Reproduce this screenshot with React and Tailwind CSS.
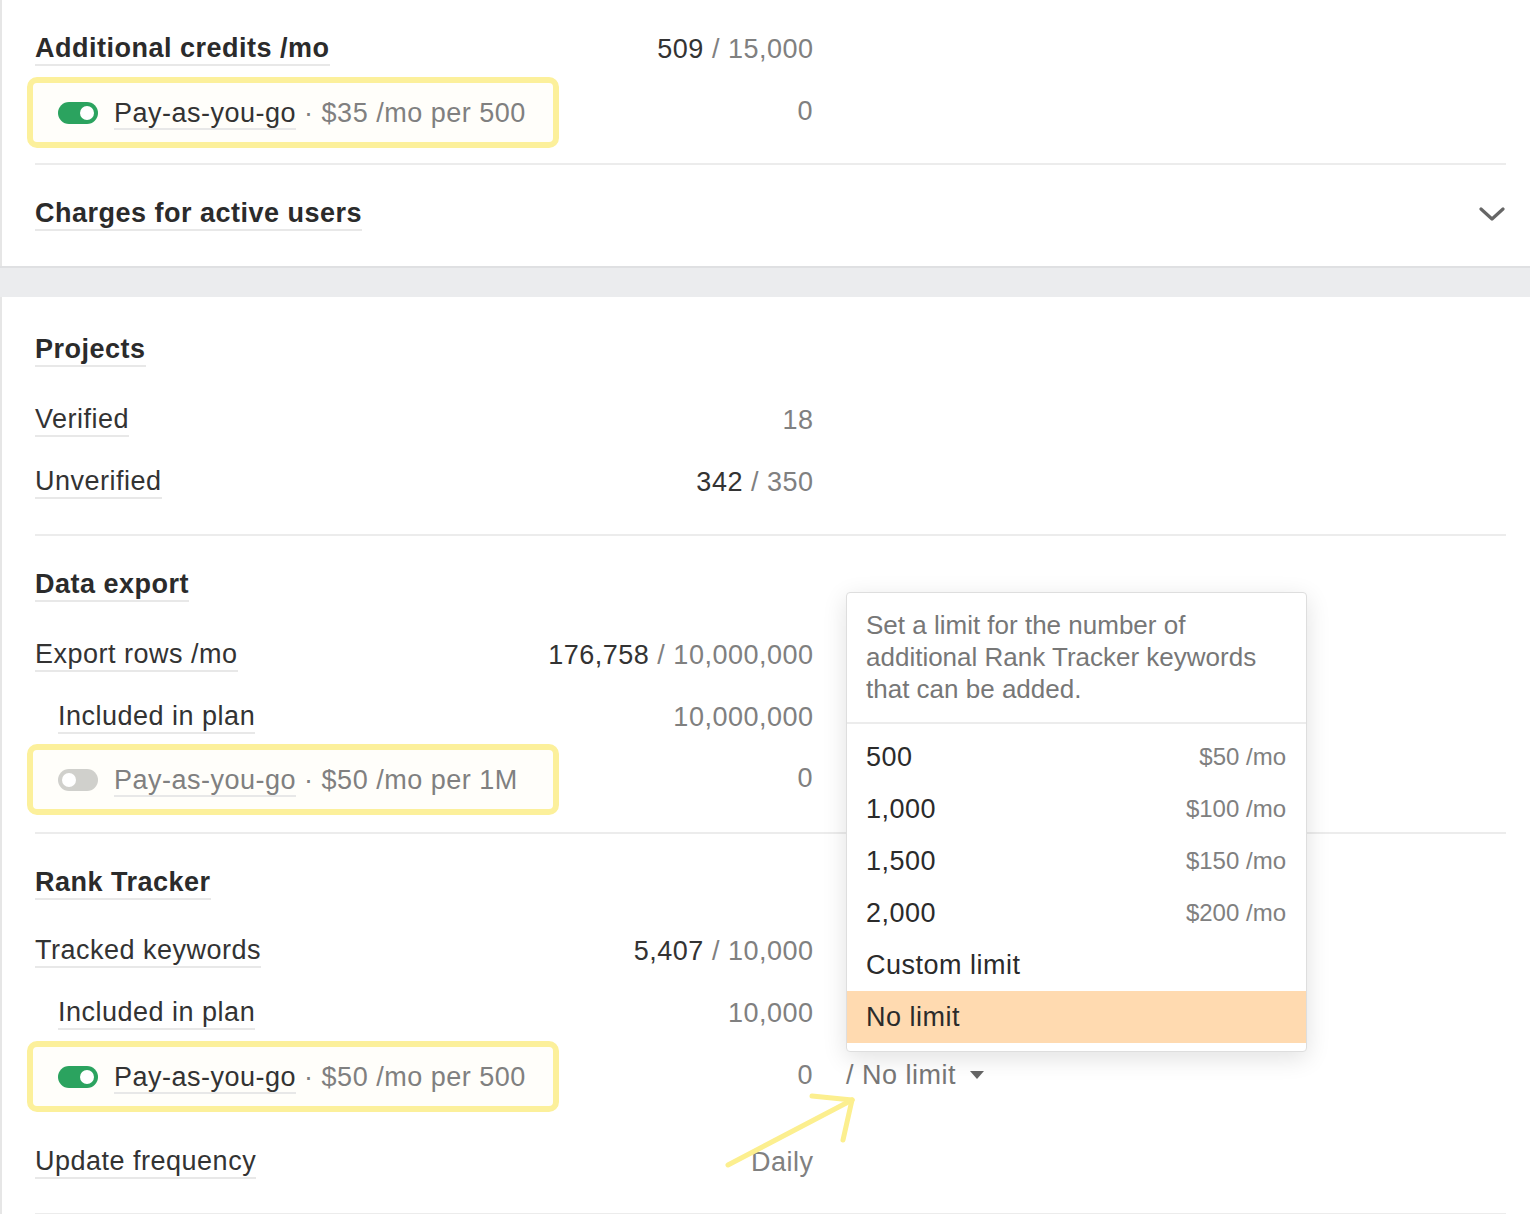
import React from 'react';

const Toggle = ({ on }) => (
  <div className={`w-[40px] h-[22px] rounded-full flex items-center px-[4px] shrink-0 ${on ? 'bg-[#2ba35f] justify-end' : 'bg-[#d0d0cc] justify-start'}`}>
    <div className="w-[14px] h-[14px] rounded-full bg-white" />
  </div>
);

const Label = ({ children, bold, indent }) => (
  <span
    className={`leading-[32px] border-b-2 border-[#e8e8e8] ${bold ? 'font-bold text-[#2b2b2b]' : 'text-[#333]'} ${indent ? 'ml-[23px]' : ''}`}
  >
    {children}
  </span>
);

const Row = ({ label, bold, indent, value, total, muted, className = '' }) => (
  <div className={`w-[778px] h-[62px] flex items-center justify-between ${className}`}>
    <Label bold={bold} indent={indent}>{label}</Label>
    {value !== undefined && (
      <span className="leading-[32px] -mr-[0.5px]">
        <span className={muted ? 'text-[#808080]' : 'text-[#333]'}>{value}</span>
        {total && <span className="text-[#808080]"> / {total}</span>}
      </span>
    )}
  </div>
);

const PaygRow = ({ on, price, className = '', extra }) => (
  <div className={`flex items-center ${className}`}>
    <div className="w-[778px] flex items-center justify-between">
      <div className="-ml-[8px] w-[532px] h-[71px] border-[6px] border-[#fcf09b] rounded-[10px] bg-[#fffefa] flex items-center pl-[25px]">
        <Toggle on={on} />
        <span className="ml-[16px] leading-[32px] whitespace-nowrap">
          <span className={`border-b-2 border-[#e8e8e8] ${on ? 'text-[#333]' : 'text-[#808080]'}`}>Pay-as-you-go</span>
          <span className="text-[#808080]"> · {price}</span>
        </span>
      </div>
      <span className="text-[#808080] leading-[32px] -mt-[3px]">0</span>
    </div>
    {extra}
  </div>
);

const Divider = ({ className = '' }) => <div className={`h-[2px] bg-[#ececec] ${className}`} />;

const options = [
  { v: '500', p: '$50 /mo' },
  { v: '1,000', p: '$100 /mo' },
  { v: '1,500', p: '$150 /mo' },
  { v: '2,000', p: '$200 /mo' },
  { v: 'Custom limit', p: '' },
  { v: 'No limit', p: '', active: true },
];

export default function App() {
  return (
    <div className="min-h-screen bg-white text-[27px] tracking-[0.5px] overflow-hidden" style={{ fontFamily: '"Liberation Sans", Arial, sans-serif' }}>
      {/* top card */}
      <div className="border-l-2 border-[#e6e6e6] pl-[33px] pr-[24px] pt-[18px] pb-[21px]">
        <Row label="Additional credits /mo" bold value="509" total="15,000" />
        <PaygRow on price="$35 /mo per 500" className="-mt-[3px]" />
        <Divider className="mt-[15px]" />
        <div className="h-[62px] mt-[18px] flex items-center justify-between">
          <Label bold>Charges for active users</Label>
          <svg width="26" height="16" viewBox="0 0 26 16" fill="none" stroke="#666" strokeWidth="3.2" strokeLinecap="round" strokeLinejoin="round" className="mr-[1px]">
            <polyline points="2,3 13,13 24,3" />
          </svg>
        </div>
      </div>

      <div className="h-[31px] bg-[#ebecee] border-t-2 border-[#dfe0e2]" />

      {/* second card */}
      <div className="relative border-l-2 border-[#e6e6e6] pl-[33px] pr-[24px] pt-[22px] pb-[40px]">
        <Row label="Projects" bold />
        <Row label="Verified" value="18" muted className="mt-[8px]" />
        <Row label="Unverified" value="342" total="350" />
        <Divider className="mt-[21px]" />

        <Row label="Data export" bold className="mt-[18px]" />
        <Row label="Export rows /mo" value="176,758" total="10,000,000" className="mt-[8px]" />
        <Row label="Included in plan" indent value="10,000,000" muted />
        <PaygRow on={false} price="$50 /mo per 1M" className="-mt-[4px]" />
        <Divider className="mt-[17px]" />

        <Row label="Rank Tracker" bold className="mt-[18px]" />
        <Row label="Tracked keywords" value="5,407" total="10,000" className="mt-[6px]" />
        <Row label="Included in plan" indent value="10,000" muted />
        <PaygRow
          on
          price="$50 /mo per 500"
          className="-mt-[3px]"
          extra={
            <div className="ml-[33px] -mt-[3px] flex items-center text-[#777] leading-[32px]">
              <span>/ No limit</span>
              <svg width="16" height="10" viewBox="0 0 16 10" className="ml-[13px]">
                <polygon points="1,1 15,1 8,9" fill="#666" />
              </svg>
            </div>
          }
        />
        <Row label="Update frequency" value="Daily" muted className="mt-[19px]" />
        <Divider className="mt-[20px]" />

        {/* dropdown */}
        <div className="absolute top-[295px] left-[844px] w-[461px] bg-white border border-[#dedede] rounded-[4px] shadow-[0_6px_24px_rgba(0,0,0,0.12)]">
          <div className="px-[19px] pt-[16px] pb-[17px] text-[26px] tracking-normal text-[#777] leading-[32px]">
            Set a limit for the number of<br />
            additional Rank Tracker keywords<br />
            that can be added.
          </div>
          <div className="h-[2px] bg-[#ececec]" />
          <div className="pt-[7px] pb-[8px]">
            {options.map((o) => (
              <div key={o.v} className={`h-[52px] pl-[19px] pr-[20px] flex items-center justify-between ${o.active ? 'bg-[#ffdab0]' : ''}`}>
                <span className="text-[#2b2b2b]">{o.v}</span>
                {o.p && <span className="text-[24px] tracking-normal text-[#808080]">{o.p}</span>}
              </div>
            ))}
          </div>
        </div>

        {/* annotation arrow */}
        <svg className="absolute top-[788px] left-[718px]" width="145" height="90" viewBox="0 0 145 90" fill="none" stroke="#fcef8f" strokeWidth="5" strokeLinecap="round" strokeLinejoin="round">
          <line x1="8" y1="80" x2="132" y2="15" />
          <line x1="132" y1="15" x2="92" y2="11" />
          <line x1="132" y1="15" x2="123" y2="55" />
        </svg>
      </div>
    </div>
  );
}
